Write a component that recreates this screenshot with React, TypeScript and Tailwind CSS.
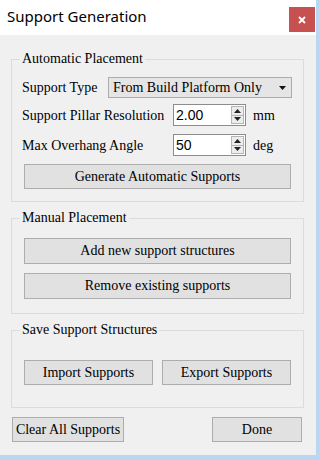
import React from "react";

function Btn({ children, className = "" }: { children: React.ReactNode; className?: string }) {
  return (
    <div
      className={`flex items-center justify-center border border-[#adadad] bg-[#e1e1e1] font-['Liberation_Serif'] text-[14px] leading-none text-black ${className}`}
    >
      {children}
    </div>
  );
}

function Spin({ value }: { value: string }) {
  return (
    <div className="flex h-[22px] w-[73px] items-stretch border border-[#8c8c8c] bg-white">
      <div className="flex flex-1 items-center pl-[2px] font-['Liberation_Sans'] text-[14px] leading-none">{value}</div>
      <div className="my-[1px] mr-[1px] flex w-[13px] flex-col">
        <div className="flex flex-1 items-center justify-center border border-[#b5b5b5] bg-[#ececec]">
          <svg width="7" height="4" viewBox="0 0 7 4">
            <path d="M0 4 L3.5 0 L7 4 Z" fill="#222" />
          </svg>
        </div>
        <div className="flex flex-1 items-center justify-center border border-t-0 border-[#b5b5b5] bg-[#ececec]">
          <svg width="7" height="4" viewBox="0 0 7 4">
            <path d="M0 0 L3.5 4 L7 0 Z" fill="#222" />
          </svg>
        </div>
      </div>
    </div>
  );
}

function Group({
  title,
  children,
  className = "",
}: {
  title: string;
  children: React.ReactNode;
  className?: string;
}) {
  return (
    <fieldset className={`w-[293px] border border-[#dcdcdc] px-[8px] ${className}`}>
      <legend className="px-[2px] font-['Liberation_Serif'] text-[14px] leading-[16px] text-black">{title}</legend>
      {children}
    </fieldset>
  );
}

export default function App() {
  return (
    <div className="h-[460px] w-[319px] bg-[#b9d7f3] font-['Liberation_Serif']">
      <div className="flex h-[455px] w-[316px] flex-col bg-[#f0f0f0]">
        <div className="flex h-[35px] items-start bg-white">
          <div className="pl-[7px] pt-[6px] font-['Noto_Sans'] text-[15px] leading-[20px] text-black">
            Support Generation
          </div>
          <div className="ml-auto mr-[1px] mt-[7px] flex h-[25px] w-[26px] items-center justify-center bg-[#c75050]">
            <svg width="8" height="8" viewBox="0 0 8 8">
              <path d="M1 1 L7 7 M7 1 L1 7" stroke="white" strokeWidth="1.8" />
            </svg>
          </div>
        </div>

        <div className="flex flex-col pl-[11px] pr-[12px] pt-[16px]">
          <Group title="Automatic Placement" className="pb-[12px]">
            <div className="mt-[10px] flex h-[21px] items-center pl-[2px] font-['Liberation_Serif'] text-[14px]">
              <span className="w-[86px] font-['Liberation_Serif']">Support Type</span>
              <div className="flex h-[21px] w-[184px] items-center border border-[#acacac] bg-[#e5e5e5] pl-[4px] pr-[5px]">
                <span className="flex-1 font-['Liberation_Serif']">From Build Platform Only</span>
                <svg width="7" height="4" viewBox="0 0 7 4">
                  <path d="M0 0 L3.5 4 L7 0 Z" fill="#111" />
                </svg>
              </div>
            </div>
            <div className="mt-[6px] flex h-[22px] items-center pl-[2px] font-['Liberation_Serif'] text-[14px]">
              <span className="w-[151px] font-['Liberation_Serif']">Support Pillar Resolution</span>
              <Spin value="2.00" />
              <span className="ml-[7px] font-['Liberation_Serif']">mm</span>
            </div>
            <div className="mt-[8px] flex h-[22px] items-center pl-[2px] font-['Liberation_Serif'] text-[14px]">
              <span className="w-[151px] font-['Liberation_Serif']">Max Overhang Angle</span>
              <Spin value="50" />
              <span className="ml-[7px] font-['Liberation_Serif']">deg</span>
            </div>
            <Btn className="mx-[4px] mt-[8px] h-[25px]">Generate Automatic Supports</Btn>
          </Group>

          <Group title="Manual Placement" className="mt-[8px] pb-[14px]">
            <Btn className="mx-[4px] mt-[12px] h-[26px]">Add new support structures</Btn>
            <Btn className="mx-[4px] mt-[9px] h-[26px]">Remove existing supports</Btn>
          </Group>

          <Group title="Save Support Structures" className="mt-[8px] pb-[22px]">
            <div className="mx-[4px] mt-[22px] flex h-[25px] gap-[9px]">
              <Btn className="w-[129px]">Import Supports</Btn>
              <Btn className="flex-1">Export Supports</Btn>
            </div>
          </Group>

          <div className="mt-[9px] flex h-[25px] items-stretch">
            <Btn className="ml-[1px] w-[112px]">Clear All Supports</Btn>
            <Btn className="ml-auto mr-[2px] w-[90px]">Done</Btn>
          </div>
        </div>
      </div>
    </div>
  );
}
